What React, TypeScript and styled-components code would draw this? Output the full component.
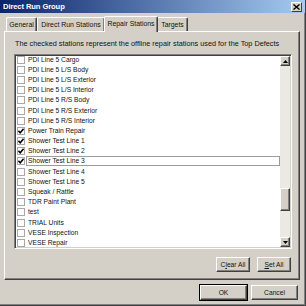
import styled, { createGlobalStyle } from "styled-components";

const GlobalStyle = createGlobalStyle`
  html, body {
    margin: 0;
    padding: 0;
    background: #d4d0c8;
  }
  body {
    font-family: "Liberation Sans", Arial, sans-serif;
    color: #111;
  }
`;

type Station = { name: string; checked?: boolean; selected?: boolean };

const stations: Station[] = [
  { name: "PDI Line 5 Cargo" },
  { name: "PDI Line 5 L/S Body" },
  { name: "PDI Line 5 L/S Exterior" },
  { name: "PDI Line 5 L/S Interior" },
  { name: "PDI Line 5 R/S Body" },
  { name: "PDI Line 5 R/S Exterior" },
  { name: "PDI Line 5 R/S Interior" },
  { name: "Power Train Repair", checked: true },
  { name: "Shower Test Line 1", checked: true },
  { name: "Shower Test Line 2", checked: true },
  { name: "Shower Test Line 3", checked: true, selected: true },
  { name: "Shower Test Line 4" },
  { name: "Shower Test Line 5" },
  { name: "Squeak / Rattle" },
  { name: "TDR Paint Plant" },
  { name: "test" },
  { name: "TRIAL Units" },
  { name: "VESE Inspection" },
  { name: "VESE Repair" },
];

const tabs = [
  { label: "General", width: 31 },
  { label: "Direct Run Stations", width: 68 },
  { label: "Repair Stations", width: 54 },
  { label: "Targets", width: 31 },
];

export default function App() {
  return (
    <>
      <GlobalStyle />
      <Window>
        <TitleBar>
          <Title>Direct Run Group</Title>
          <CloseButton>
            <svg width="7" height="6" viewBox="0 0 7 6">
              <path d="M0.5 0.5 L6.5 5.5 M6.5 0.5 L0.5 5.5" stroke="#000" strokeWidth="1.4" />
            </svg>
          </CloseButton>
        </TitleBar>

        <TabStrip>
          {tabs.map((t) => (
            <Tab key={t.label} $w={t.width} $active={t.label === "Repair Stations"}>
              {t.label}
            </Tab>
          ))}
        </TabStrip>

        <Panel>
          <Hint>The checked stations represent the offline repair stations used for the Top Defects</Hint>
          <ListFrame>
            <Rows>
              {stations.map((s) => (
                <Row key={s.name}>
                  <Check>
                    {s.checked && (
                      <svg width="6" height="6" viewBox="0 0 6 6">
                        <path d="M0.4 2.8 L2.2 4.7 L5.6 0.8" stroke="#000" strokeWidth="1.6" fill="none" />
                      </svg>
                    )}
                  </Check>
                  <Label $selected={!!s.selected}>{s.name}</Label>
                </Row>
              ))}
            </Rows>
            <ScrollBar>
              <ArrowButton>
                <svg width="5" height="3" viewBox="0 0 5 3">
                  <path d="M0 3 L2.5 0 L5 3 Z" fill="#000" />
                </svg>
              </ArrowButton>
              <Track>
                <Thumb />
              </Track>
              <ArrowButton>
                <svg width="5" height="3" viewBox="0 0 5 3">
                  <path d="M0 0 L2.5 3 L5 0 Z" fill="#000" />
                </svg>
              </ArrowButton>
            </ScrollBar>
          </ListFrame>
          <ButtonRow>
            <Button $w={34}>
              C<u>l</u>ear All
            </Button>
            <Button $w={34}>
              <u>S</u>et All
            </Button>
          </ButtonRow>
        </Panel>

        <Footer>
          <Button $w={47} $default>
            OK
          </Button>
          <Button $w={47}>Cancel</Button>
        </Footer>
      </Window>
    </>
  );
}

const Window = styled.div`
  width: 306px;
  height: 306px;
  box-sizing: border-box;
  background: #d4d0c8;
  border-right: 1px solid #404040;
  border-bottom: 1px solid #404040;
  box-shadow: inset -1px -1px 0 #808080;
  overflow: hidden;
`;

const TitleBar = styled.div`
  height: 13px;
  display: flex;
  align-items: center;
  justify-content: space-between;
  padding: 0 3px;
  background: linear-gradient(to right, #0a246a, #a6caf0);
`;

const Title = styled.span`
  color: #fff;
  font-weight: bold;
  font-size: 7.6px;
  letter-spacing: -0.1px;
`;

const CloseButton = styled.div`
  width: 11px;
  height: 10px;
  box-sizing: border-box;
  display: flex;
  align-items: center;
  justify-content: center;
  background: #d4d0c8;
  border: 1px solid;
  border-color: #fff #404040 #404040 #fff;
`;

const TabStrip = styled.div`
  display: flex;
  align-items: flex-end;
  height: 14px;
  margin-top: 4px;
  padding-left: 6px;
`;

const Tab = styled.div<{ $w: number; $active: boolean }>`
  width: ${({ $w }) => $w}px;
  height: ${({ $active }) => ($active ? 16 : 14)}px;
  margin: 0 ${({ $active }) => ($active ? -1 : 0)}px ${({ $active }) => ($active ? -1 : 0)}px;
  position: relative;
  z-index: ${({ $active }) => ($active ? 2 : 1)};
  box-sizing: border-box;
  padding-top: 2px;
  text-align: center;
  font-size: 6.9px;
  line-height: 10px;
  white-space: nowrap;
  background: #d4d0c8;
  border-top: 1px solid #fff;
  border-left: 1px solid #fff;
  border-right: 1px solid #404040;
  box-shadow: inset -1px 0 0 #808080;
  border-radius: 2px 2px 0 0;
`;

const Panel = styled.div`
  margin: 0 5px 0 4px;
  height: 249px;
  box-sizing: border-box;
  padding: 7px 8px 0 9px;
  border-top: 1px solid #fff;
  border-left: 1px solid #fff;
  border-right: 1px solid #404040;
  border-bottom: 1px solid #404040;
  box-shadow: inset -1px -1px 0 #808080;
  display: flex;
  flex-direction: column;
`;

const Hint = styled.div`
  font-size: 7.3px;
  line-height: 9px;
  height: 9px;
  white-space: nowrap;
  padding-left: 1px;
`;

const ListFrame = styled.div`
  margin-top: 6px;
  width: 278px;
  height: 195px;
  box-sizing: border-box;
  display: flex;
  background: #fff;
  border-top: 1px solid #808080;
  border-left: 1px solid #808080;
  border-right: 1px solid #fff;
  border-bottom: 1px solid #fff;
  box-shadow: inset 1px 1px 0 #404040, inset -1px -1px 0 #d4d0c8;
  padding: 1px;
`;

const Rows = styled.div`
  flex: 1;
  overflow: hidden;
  margin-top: -1.5px;
`;

const Row = styled.div`
  height: 10.2px;
  display: flex;
  align-items: center;
`;

const Check = styled.div`
  width: 8px;
  height: 8px;
  margin: 0 1px;
  box-sizing: border-box;
  border: 1px solid #a8a8a8;
  background: #fff;
  display: flex;
  align-items: center;
  justify-content: center;
  flex-shrink: 0;
`;

const Label = styled.div<{ $selected: boolean }>`
  flex: 1;
  height: 10px;
  box-sizing: border-box;
  font-size: 6.7px;
  line-height: 8px;
  padding-left: 1px;
  white-space: nowrap;
  border: 1px solid ${({ $selected }) => ($selected ? "#9c9c9c" : "transparent")};
`;

const ScrollBar = styled.div`
  width: 10px;
  display: flex;
  flex-direction: column;
  background: #ebe9e4;
`;

const ArrowButton = styled.div`
  height: 10px;
  box-sizing: border-box;
  display: flex;
  align-items: center;
  justify-content: center;
  background: #d4d0c8;
  border-top: 1px solid #fff;
  border-left: 1px solid #fff;
  border-right: 1px solid #404040;
  border-bottom: 1px solid #404040;
  box-shadow: inset -1px -1px 0 #808080;
`;

const Track = styled.div`
  flex: 1;
  display: flex;
  flex-direction: column;
  justify-content: flex-end;
  padding-bottom: 26px;
`;

const Thumb = styled.div`
  height: 23px;
  box-sizing: border-box;
  background: #d4d0c8;
  border-top: 1px solid #fff;
  border-left: 1px solid #fff;
  border-right: 1px solid #404040;
  border-bottom: 1px solid #404040;
  box-shadow: inset -1px -1px 0 #808080;
`;

const ButtonRow = styled.div`
  display: flex;
  justify-content: flex-end;
  gap: 7px;
  margin-top: 8px;
`;

const Button = styled.div<{ $w: number; $default?: boolean }>`
  width: ${({ $w }) => $w}px;
  height: 15px;
  box-sizing: border-box;
  display: flex;
  align-items: center;
  justify-content: center;
  font-size: 6.7px;
  background: #d4d0c8;
  border-top: 1px solid #fff;
  border-left: 1px solid #fff;
  border-right: 1px solid #404040;
  border-bottom: 1px solid #404040;
  box-shadow: inset -1px -1px 0 #808080;
  outline: ${({ $default }) => ($default ? "1px solid #000" : "none")};
`;

const Footer = styled.div`
  display: flex;
  justify-content: flex-end;
  gap: 4px;
  padding: 5px 7px 0 0;
`;
